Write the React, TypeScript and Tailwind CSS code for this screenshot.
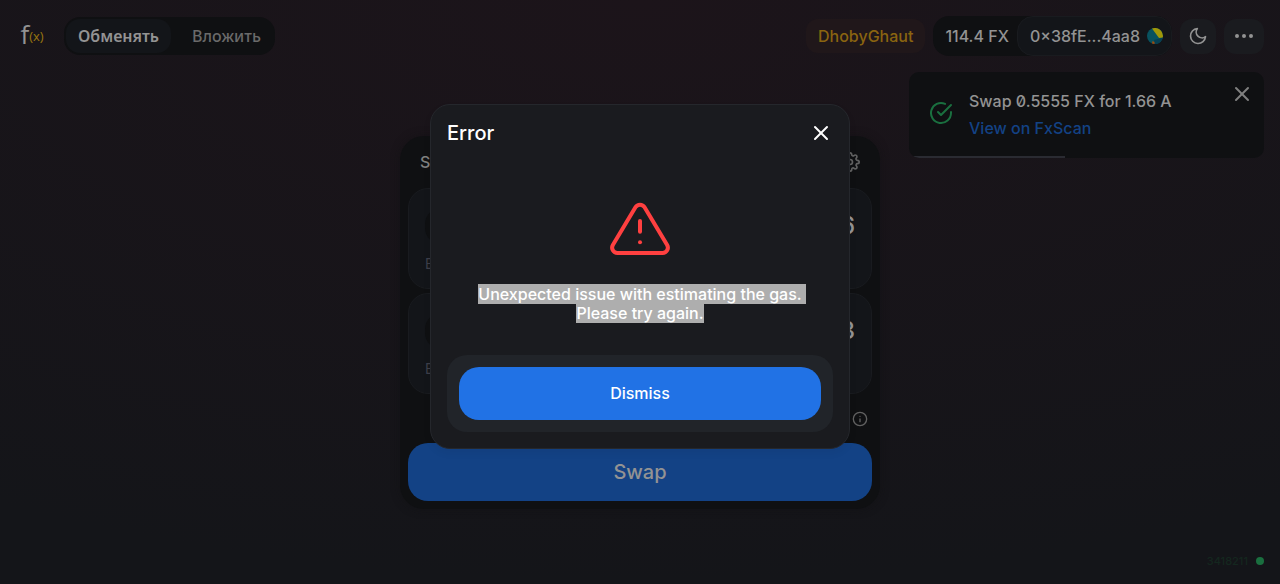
import React from 'react';
import { FiAlertTriangle, FiCheckCircle, FiInfo, FiMoon, FiMoreHorizontal, FiSettings, FiX } from 'react-icons/fi';

interface TokenPanelProps {
    id: string;
    amount: string;
}

const Logo: React.FC = () => (
    <a href="#" aria-label="Home" className="flex w-8 items-start justify-center">
        <span className="font-['Open_Sans',sans-serif] text-[26px] leading-6 text-[#939393]">f</span>
        <span className="font-['Open_Sans',sans-serif] text-[13px] leading-7 text-[#9a7610]">(x)</span>
    </a>
);

const Header: React.FC = () => (
    <header className="flex h-[72px] items-center justify-between px-4 text-base font-medium">
        <div className="flex items-center gap-4">
            <Logo />
            <nav className="flex rounded-2xl bg-[#0f1012] p-0.5 font-['Noto_Sans',sans-serif]">
                <a href="#swap" className="rounded-[14px] bg-[#131519] px-3 py-1 leading-[26px] font-semibold text-[#939393]">
                    Обменять
                </a>
                <a href="#pool" className="ml-[9px] rounded-[14px] px-3 py-1 leading-[26px] text-[#6a6a6a]">
                    Вложить
                </a>
            </nav>
        </div>
        <div className="flex items-center gap-2">
            <div className="rounded-xl bg-[#20171a] px-3 py-[5px] text-[#8a6410]">DhobyGhaut</div>
            <div className="flex items-center rounded-2xl bg-[#0f1012]">
                <span className="px-2 pl-3 text-[#939393]">114.4 FX</span>
                <button className="flex h-10 items-center gap-[7px] rounded-2xl border border-[#191b1f] bg-[#131519] pr-2 pl-3 text-[#939393]">
                    0×38fE...4aa8
                    <svg viewBox="0 0 16 16" className="size-4" aria-hidden="true">
                        <circle cx="8" cy="8" r="8" fill="#08525f" />
                        <path d="M5 0.6A8 8 0 0 1 15.8 9.5L12 10Z" fill="#a09708" />
                        <path d="M7 12L15.7 9.8A8 8 0 0 1 8 16Z" fill="#073f52" />
                        <path d="M5.5 13L7.5 14V16L5 15.4Z" fill="#a34a0b" />
                    </svg>
                </button>
            </div>
            <button aria-label="Dark mode" className="flex h-[35px] w-9 items-center justify-center rounded-xl bg-[#1a1b1f] text-[#939393]">
                <FiMoon className="size-5" />
            </button>
            <button aria-label="More" className="flex h-[35px] w-10 items-center justify-center rounded-xl bg-[#1a1b1f] text-[#939393]">
                <FiMoreHorizontal className="size-6" />
            </button>
        </div>
    </header>
);

const TokenPanel: React.FC<TokenPanelProps> = ({ id, amount }) => (
    <div className="rounded-[20px] border border-[#191b1f] bg-[#131519] p-4">
        <div className="flex h-[42px] items-center justify-between">
            <button aria-label="Select token" className="h-9 w-24 rounded-2xl bg-[#0f1012]" />
            <input
                id={id}
                aria-label="Amount"
                defaultValue={amount}
                className="w-40 bg-transparent text-right text-2xl font-medium text-[#939393] outline-none"
            />
        </div>
        <div className="mt-2 text-sm leading-[17px] text-[#3d3e49]">Balance</div>
    </div>
);

const SwapCard: React.FC = () => (
    <main className="mx-auto mt-16 w-full max-w-[480px] rounded-3xl bg-[#0f1012] p-2 shadow-[0_0_8px_#0f101280]">
        <div className="flex h-11 items-center justify-between px-3 pb-2">
            <h1 className="text-base font-medium text-[#808080]">Swap</h1>
            <button aria-label="Settings" className="text-[#616161]">
                <FiSettings className="size-5" />
            </button>
        </div>
        <div className="flex flex-col gap-1">
            <TokenPanel id="input-amount" amount="0.5556" />
            <TokenPanel id="output-amount" amount="1.663" />
        </div>
        <div className="flex h-[49px] items-center justify-end pr-1">
            <FiInfo className="size-4 text-[#616161]" />
        </div>
        <button className="h-[58px] w-full rounded-[20px] bg-[#134285] text-xl font-medium text-[#939393]">Swap</button>
    </main>
);

const Toast: React.FC = () => (
    <div role="status" className="absolute top-[72px] right-4 flex w-[355px] items-start overflow-hidden rounded-[10px] bg-[#0f1012] px-5 pt-[17px] pb-[18px] text-base font-medium">
        <FiCheckCircle className="mt-3 size-6 text-[#1a6f3f]" />
        <div className="ml-4 flex flex-col gap-[3px] leading-6">
            <span className="text-[#939393] [font-feature-settings:'zero']">Swap 0.5555 FX for 1.66 A</span>
            <a href="#tx" className="text-[#134285]">View on FxScan</a>
        </div>
        <button aria-label="Close" className="absolute top-2.5 right-2.5 text-[#808080]">
            <FiX className="size-6" />
        </button>
        <div className="absolute bottom-0 left-0 h-0.5 w-[44%] bg-[#2a2b32]" />
    </div>
);

const ErrorDialog: React.FC = () => (
    <div className="absolute inset-0 flex items-center justify-center">
        <div
            role="dialog"
            aria-labelledby="error-title"
            className="mb-8 w-full max-w-[420px] rounded-[20px] border border-[#25272c] bg-[#1a1b1f] p-4 shadow-[0_4px_8px_#0000000d]"
        >
            <div className="flex h-6 items-center justify-between">
                <h2 id="error-title" className="text-xl font-medium text-white">Error</h2>
                <button aria-label="Close" className="text-white">
                    <FiX className="size-6" />
                </button>
            </div>
            <div className="flex flex-col items-center px-6 pt-[52px] pb-8">
                <FiAlertTriangle className="size-16 text-[#ff4040]" strokeWidth={1.5} />
                <p className="mt-6 text-center text-base leading-[19px] font-medium whitespace-pre-wrap text-white">
                    <span className="bg-[#aeaeae]">Unexpected issue with estimating the gas. Please try again.</span>
                </p>
            </div>
            <div className="rounded-[20px] bg-[#212429] p-3">
                <button className="h-[53px] w-full rounded-[20px] bg-[#2172e5] text-base font-medium text-white">Dismiss</button>
            </div>
        </div>
    </div>
);

export default function App() {
    return (
        <div className="relative min-h-screen w-full overflow-hidden bg-[#141519] bg-[radial-gradient(100%_100%_at_50%_0%,#1c141a_0%,#141519_100%)] font-[Inter,sans-serif]">
            <Header />
            <SwapCard />
            <Toast />
            <div className="absolute right-4 bottom-4 flex items-center gap-2 text-[11px] leading-3.5 font-medium text-[#14271f]">
                3418211
                <span className="size-2 rounded-full bg-[#1a6f3f]" />
            </div>
            <ErrorDialog />
        </div>
    );
}
